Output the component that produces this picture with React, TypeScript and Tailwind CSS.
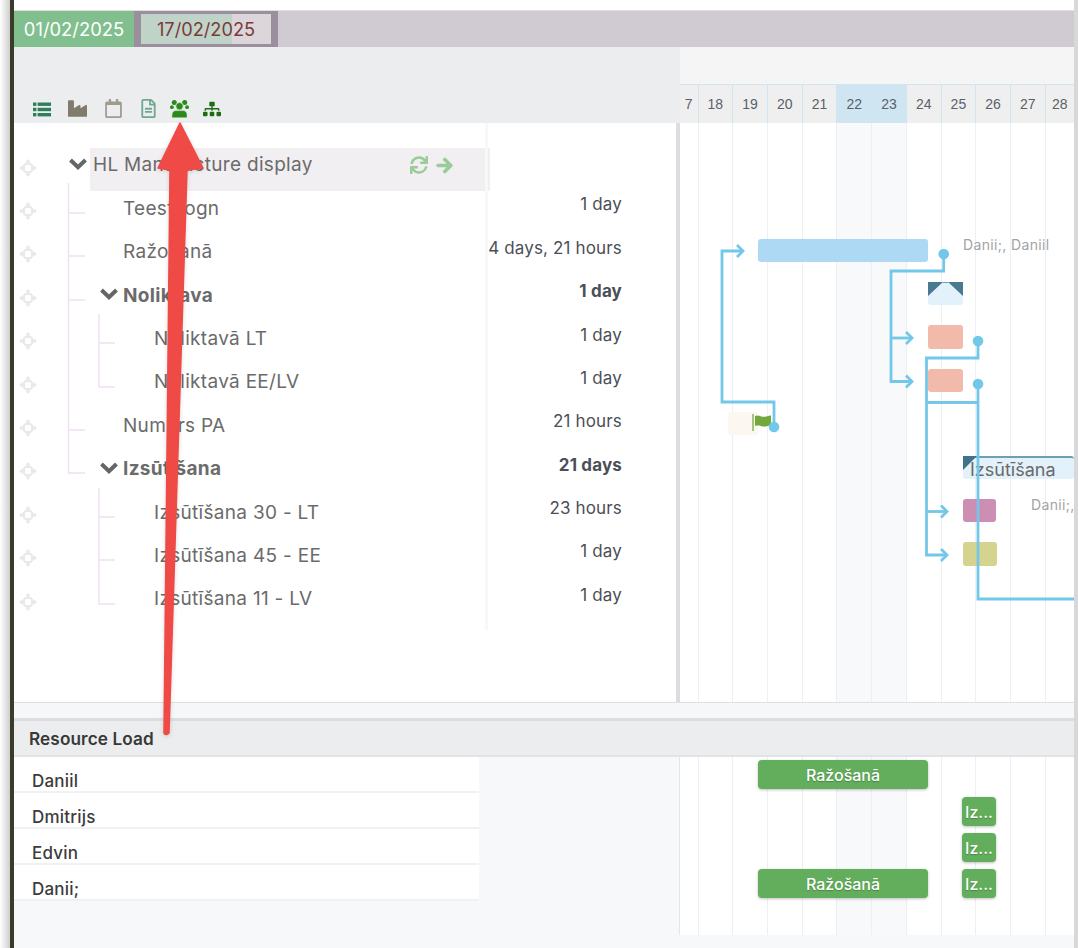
import React from "react";
import { FaIndustry, FaRegCalendar, FaRegFileAlt, FaSitemap, FaSync } from "react-icons/fa";

type Row = { name: string; dur?: string; level: number; bold?: boolean; parent?: boolean };

const rows: Row[] = [
  { name: "HL Manufacture display", level: 0, parent: true },
  { name: "Teest logn", dur: "1 day", level: 1 },
  { name: "Ražošanā", dur: "4 days, 21 hours", level: 1 },
  { name: "Noliktava", dur: "1 day", level: 1, bold: true, parent: true },
  { name: "Noliktavā LT", dur: "1 day", level: 2 },
  { name: "Noliktavā EE/LV", dur: "1 day", level: 2 },
  { name: "Numurs PA", dur: "21 hours", level: 1 },
  { name: "Izsūtīšana", dur: "21 days", level: 1, bold: true, parent: true },
  { name: "Izsūtīšana 30 - LT", dur: "23 hours", level: 2 },
  { name: "Izsūtīšana 45 - EE", dur: "1 day", level: 2 },
  { name: "Izsūtīšana 11 - LV", dur: "1 day", level: 2 },
];

const days = ["7", "18", "19", "20", "21", "22", "23", "24", "25", "26", "27", "28"];
const resources = ["Daniil", "Dmitrijs", "Edvin", "Danii;"];

function DragIcon() {
  return (
    <svg className="translate-y-[2px]" width="18" height="18" viewBox="0 0 18 18" fill="none" stroke="#e8e8e8" strokeWidth="2.2">
      <circle cx="9" cy="9" r="4.6" />
      <path d="M9 2.5v3.5M9 12v3.5M2.5 9H6M12 9h3.5" strokeWidth="2.4" />
      <path d="M6.8 2.6L9 .6l2.2 2zM6.8 15.4L9 17.4l2.2-2zM2.6 6.8L.6 9l2 2.2zM15.4 6.8L17.4 9l-2 2.2z" fill="#e8e8e8" strokeWidth="0.6" />
    </svg>
  );
}

function ListIcon() {
  return (
    <svg width="18" height="15" viewBox="0 0 18 15" fill="#2f7d5b">
      <rect x="0" y="0.5" width="3.4" height="3.4" />
      <rect x="4.6" y="0.5" width="13.4" height="3.4" />
      <rect x="0" y="5.8" width="3.4" height="3.4" />
      <rect x="4.6" y="5.8" width="13.4" height="3.4" />
      <rect x="0" y="11" width="3.4" height="3.4" />
      <rect x="4.6" y="11" width="13.4" height="3.4" />
    </svg>
  );
}

function UsersIcon() {
  return (
    <svg width="19" height="18" viewBox="0 0 19 18" fill="#2a8a1a">
      <circle cx="4.3" cy="2.6" r="2.5" />
      <circle cx="14.7" cy="2.6" r="2.5" />
      <circle cx="1.9" cy="7.2" r="1.9" />
      <circle cx="17.1" cy="7.2" r="1.9" />
      <circle cx="9.5" cy="6.2" r="3.7" stroke="#ecedef" strokeWidth="0.7" />
      <path d="M2 17.8C1.5 13 3 10.6 6 10.6H13C16 10.6 17.5 13 17 17.8Z" stroke="#ecedef" strokeWidth="0.5" />
    </svg>
  );
}

function ArrowIcon() {
  return (
    <svg width="17" height="17" viewBox="0 0 17 17" fill="none" stroke="#99cc99" strokeWidth="3.6" strokeLinecap="round" strokeLinejoin="round">
      <path d="M2 8.5H14M8.8 2.5L14.8 8.5L8.8 14.5" />
    </svg>
  );
}

function ChevronIcon() {
  return (
    <svg className="mr-[6px] shrink-0 -translate-y-[2px]" width="18" height="13" viewBox="0 0 18 13" fill="none" stroke="#666666" strokeWidth="4">
      <path d="M1.5 3L9 10.2L16.5 3" />
    </svg>
  );
}

function DayColumns({ header }: { header?: boolean }) {
  return (
    <div className="flex h-full">
      {days.map((d, i) => {
        const weekend = d === "22" || d === "23";
        const width = i === 0 ? "w-[18.5px]" : i === 11 ? "w-[29px]" : "w-[34.73px]";
        if (header) {
          return (
            <div
              key={d}
              className={`${width} shrink-0 flex items-center justify-center border-r border-[#cfe6f2] text-[14px] text-[#5a5f6a] ${
                weekend ? "bg-[#cfe6f2]" : "bg-[#efefef]"
              }`}
            >
              {d}
            </div>
          );
        }
        return (
          <div
            key={d}
            className={`${width} shrink-0 border-r-[1.5px] border-[#eeeff1] ${weekend ? "bg-[#f8f9fb]" : ""}`}
          />
        );
      })}
    </div>
  );
}

function TreeRow({ row }: { row: Row }) {
  const textCls = "text-[19px] tracking-[0.3px] text-[#6b6b6b] whitespace-nowrap";
  return (
    <div className="flex h-[43.4px] items-center">
      <div className="w-[5px] shrink-0" />
      <DragIcon />
      <div className="w-[477px] shrink-0">
        {row.parent ? (
          <div className={`flex items-center ${row.level === 0 ? "pl-[32px]" : "pl-[63px]"}`}>
            <ChevronIcon />
            <span className={`${textCls} ${row.bold ? "font-bold" : "font-normal"} ${row.level === 0 ? "" : "-ml-[1px]"}`}>
              {row.name}
            </span>
          </div>
        ) : (
          <div className={`${textCls} ${row.level === 1 ? "pl-[86px]" : "pl-[117px]"}`}>{row.name}</div>
        )}
      </div>
      <div
        className={`-ml-[26px] w-[134px] shrink-0 -translate-y-[4px] whitespace-nowrap text-right text-[17px] tracking-[0.15px] text-[#4b4f57] ${
          row.bold ? "font-bold" : ""
        }`}
      >
        {row.dur}
      </div>
    </div>
  );
}

const resBar =
  "absolute flex h-[29px] items-center rounded-[4px] bg-[#62ae5c] text-[16px] font-medium text-white shadow-[0_1px_3px_rgba(0,0,0,0.25)] [text-shadow:0_1px_1px_rgba(0,0,0,0.25)]";

export default function App() {
  return (
    <div className="relative flex h-[948px] w-[1078px] overflow-hidden bg-white font-['Inter','Liberation_Sans',sans-serif]">
      <div className="w-[10px] shrink-0 bg-gradient-to-r from-white to-[#cfcfcf]" />
      <div className="w-[4px] shrink-0 bg-[#3a3b2b]" />

      <div className="flex w-[1060px] shrink-0 flex-col">
        <div className="h-[10px] shrink-0 bg-white" />
        <div className="h-[1px] shrink-0 bg-[#e0dee2]" />

        {/* date bar */}
        <div className="flex h-[36px] shrink-0 bg-[#d0cbd3]">
          <div className="flex w-[120px] items-center justify-center bg-[#81bf8f] pt-[2px] text-[18.4px] text-white">
            01/02/2025
          </div>
          <div className="flex h-full w-[144px] items-center bg-[#9c8f9d] px-[7px] py-[3px]">
            <div className="flex h-full w-full items-center justify-center bg-gradient-to-r from-[#c0d3c8] from-[70%] to-[#dcd5da] to-[70%] pt-[1px] text-[18.2px] text-[#7a3b3b]">
              17/02/2025
            </div>
          </div>
        </div>

        {/* header */}
        <div className="flex h-[76px] shrink-0">
          <div className="flex w-[666px] shrink-0 items-end bg-[#ecedef] pb-[4px] pl-[19px]">
            <div className="mb-[2px]">
              <ListIcon />
            </div>
            <FaIndustry className="ml-[17px] mb-[1px] text-[19px] text-[#7f7c6b]" />
            <FaRegCalendar className="ml-[16.5px] mb-[1px] text-[19px] text-[#a09c90]" />
            <FaRegFileAlt className="ml-[16px] mb-[1px] text-[19px] text-[#6ea892]" />
            <div className="ml-[12.5px] mb-[1px]">
              <UsersIcon />
            </div>
            <FaSitemap className="ml-[13.5px] mb-[1px] text-[18px] text-[#1f6b12]" />
          </div>
          <div className="flex min-w-0 flex-1 flex-col">
            <div className="h-[38px] shrink-0 border-b border-[#cfe6f2] bg-[#f6f5f6]" />
            <div className="flex-1 font-['Liberation_Sans',sans-serif]">
              <DayColumns header />
            </div>
          </div>
        </div>

        {/* gantt body */}
        <div className="flex h-[580px] shrink-0 border-b border-[#dfe0e4]">
          <div className="relative w-[666px] shrink-0 border-r-[4px] border-[#dcdde2] bg-white">
            {/* selected row highlight */}
            <div className="absolute left-[76px] top-[25px] flex h-[43px] w-[400px] items-center justify-end gap-[8px] bg-[#efebef]/80 pb-[9px] pr-[37px] text-[#99cc99]">
              <FaSync className="text-[18px]" />
              <ArrowIcon />
            </div>
            <div className="absolute left-[471px] top-0 h-[507px] w-[3px] bg-[#f8f8f8]" />
            {/* tree connector lines */}
            <svg className="absolute left-0 top-0" width="130" height="507" viewBox="14 123 130 507" fill="none" stroke="#efdff3" strokeWidth="1.4">
              <path d="M68.5 183V473H85M68.5 213H85M68.5 256H85M68.5 300H85M68.5 430H85" />
              <path d="M99 314V387H115M99 343H115" />
              <path d="M99 488V604H115M99 517H115M99 560H115" />
            </svg>
            <div className="relative flex flex-col pt-[21px]">
              {rows.map((r) => (
                <TreeRow key={r.name} row={r} />
              ))}
            </div>
          </div>

          {/* timeline */}
          <div className="relative min-w-0 flex-1 overflow-hidden bg-white">
            <DayColumns />
            <div className="absolute left-[78px] top-[116px] h-[23px] w-[170px] rounded-[3px] bg-[#aed9f4]" />
            <div className="absolute left-[283px] top-[113px] whitespace-nowrap text-[14px] leading-[18px] tracking-[0.35px] text-[#a3a3a3]">
              Danii;, Daniil
            </div>
            <div className="absolute left-[248px] top-[159px] h-[23px] w-[35px] rounded-[3px] bg-[#e3f1fb]" />
            <div className="absolute left-[248px] top-[202px] h-[23.5px] w-[35px] rounded-[3px] bg-[#f2baab]" />
            <div className="absolute left-[248px] top-[246px] h-[23px] w-[35px] rounded-[3px] bg-[#f2baab]" />
            <div className="absolute left-[48px] top-[289px] h-[23px] w-[30px] rounded-[3px] bg-[#fcf7f1]" />
            <div className="absolute left-[283px] top-[333px] flex h-[23px] w-[111px] items-center overflow-hidden rounded-[3px] border-t-[2.5px] border-[#6f9fb2] bg-[#e3f1fb] pl-[7px] pt-[1px] text-[18px] text-[#6a6a6a]">
              Izsūtīšana
            </div>
            <div className="absolute left-[351px] top-[373px] whitespace-nowrap text-[14px] leading-[18px] tracking-[0.35px] text-[#a3a3a3]">
              Danii;,
            </div>
            <div className="absolute left-[283px] top-[376px] h-[23px] w-[33px] rounded-[3px] bg-[#cd8eb3]" />
            <div className="absolute left-[283px] top-[419px] h-[24px] w-[34px] rounded-[3px] bg-[#d5d48f]" />

            <svg className="absolute left-0 top-0" width="394" height="579" viewBox="680 123 394 579" fill="none">
              {/* summary markers */}
              <path d="M928 282H943L928 296ZM948 282H963V296Z" fill="#4a7a90" />
              <path d="M943 282H948V283H943Z" fill="#6f9fb2" />
              <path d="M963 456H977L963 470Z" fill="#3f7389" />
              {/* flag */}
              <path d="M753 414V431" stroke="#7eb04a" strokeWidth="1.4" />
              <path d="M755 416C759 414 762 418 766 416.5C768 416 770 415.5 771 415.5V425.5C768 425.5 766 427 763 426.5C760 426 758 425 755 426Z" fill="#72a83c" />
              {/* links */}
              <g stroke="#73c7e8" strokeWidth="2.8">
                <path d="M774 427V402H722V251H742" />
                <path d="M737 245L743 251L737 257" />
                <path d="M943.7 254V271H891V381.5H911" />
                <path d="M891 338H911" />
                <path d="M906 332L912 338L906 344" />
                <path d="M906 375.5L912 381.5L906 387.5" />
                <path d="M978 341V358H926.5V555H946" />
                <path d="M926.5 511.5H946" />
                <path d="M941 505.5L947 511.5L941 517.5" />
                <path d="M941 549L947 555L941 561" />
                <path d="M926.5 402.5H978" />
                <path d="M978 384V599H1074" />
              </g>
              <g fill="#73c7e8">
                <circle cx="774" cy="427" r="5.3" />
                <circle cx="943.7" cy="254" r="5.3" />
                <circle cx="978" cy="341" r="5.3" />
                <circle cx="978" cy="384" r="5.3" />
              </g>
            </svg>
          </div>
        </div>

        <div className="h-[15px] shrink-0 bg-[#f6f7f9]" />
        <div className="h-[3px] shrink-0 bg-[#dcdde2]" />

        {/* resource header */}
        <div className="flex h-[36px] shrink-0 items-center border-b-2 border-[#e2e3e6] bg-[#ecedef] pl-[15px] pt-[2px] text-[17.2px] font-semibold tracking-[0.1px] text-[#383838]">
          Resource Load
        </div>

        {/* resource body */}
        <div className="flex flex-1 bg-[#f7f8fa]">
          <div className="w-[465px] shrink-0">
            <div className="flex flex-col">
              {resources.map((r) => (
                <div
                  key={r}
                  className="flex h-[36px] items-center border-b-2 border-[#f0f1f3] bg-white pl-[18px] pt-[14px] text-[17px] font-medium leading-[22px] tracking-[0.2px] text-[#3c3c3c]"
                >
                  {r}
                </div>
              ))}
            </div>
          </div>
          <div className="w-[200px] shrink-0" />
          <div className="relative h-[178px] min-w-0 flex-1 overflow-hidden border-l border-[#e4e5e8] bg-white">
            <DayColumns />
            <div className={`${resBar} left-[78px] top-[3px] w-[170px] justify-center`}>Ražošanā</div>
            <div className={`${resBar} left-[282px] top-[40px] w-[34px] justify-center`}>Iz...</div>
            <div className={`${resBar} left-[282px] top-[76px] w-[34px] justify-center`}>Iz...</div>
            <div className={`${resBar} left-[78px] top-[112px] w-[170px] justify-center`}>Ražošanā</div>
            <div className={`${resBar} left-[282px] top-[112px] w-[34px] justify-center`}>Iz...</div>
          </div>
        </div>
      </div>

      <div className="w-[4px] shrink-0 bg-[#d8d8d8]" />

      {/* annotation arrow */}
      <svg className="pointer-events-none absolute left-0 top-0 drop-shadow-sm" width="1078" height="948" viewBox="0 0 1078 948" fill="none">
        <path
          d="M180 123L203 168L187 170L169 733Q166 736 164 733L170 170L158 168Z"
          fill="#ef4a45"
          stroke="#ef4a45"
          strokeWidth="1.5"
          strokeLinejoin="round"
        />
      </svg>
    </div>
  );
}
